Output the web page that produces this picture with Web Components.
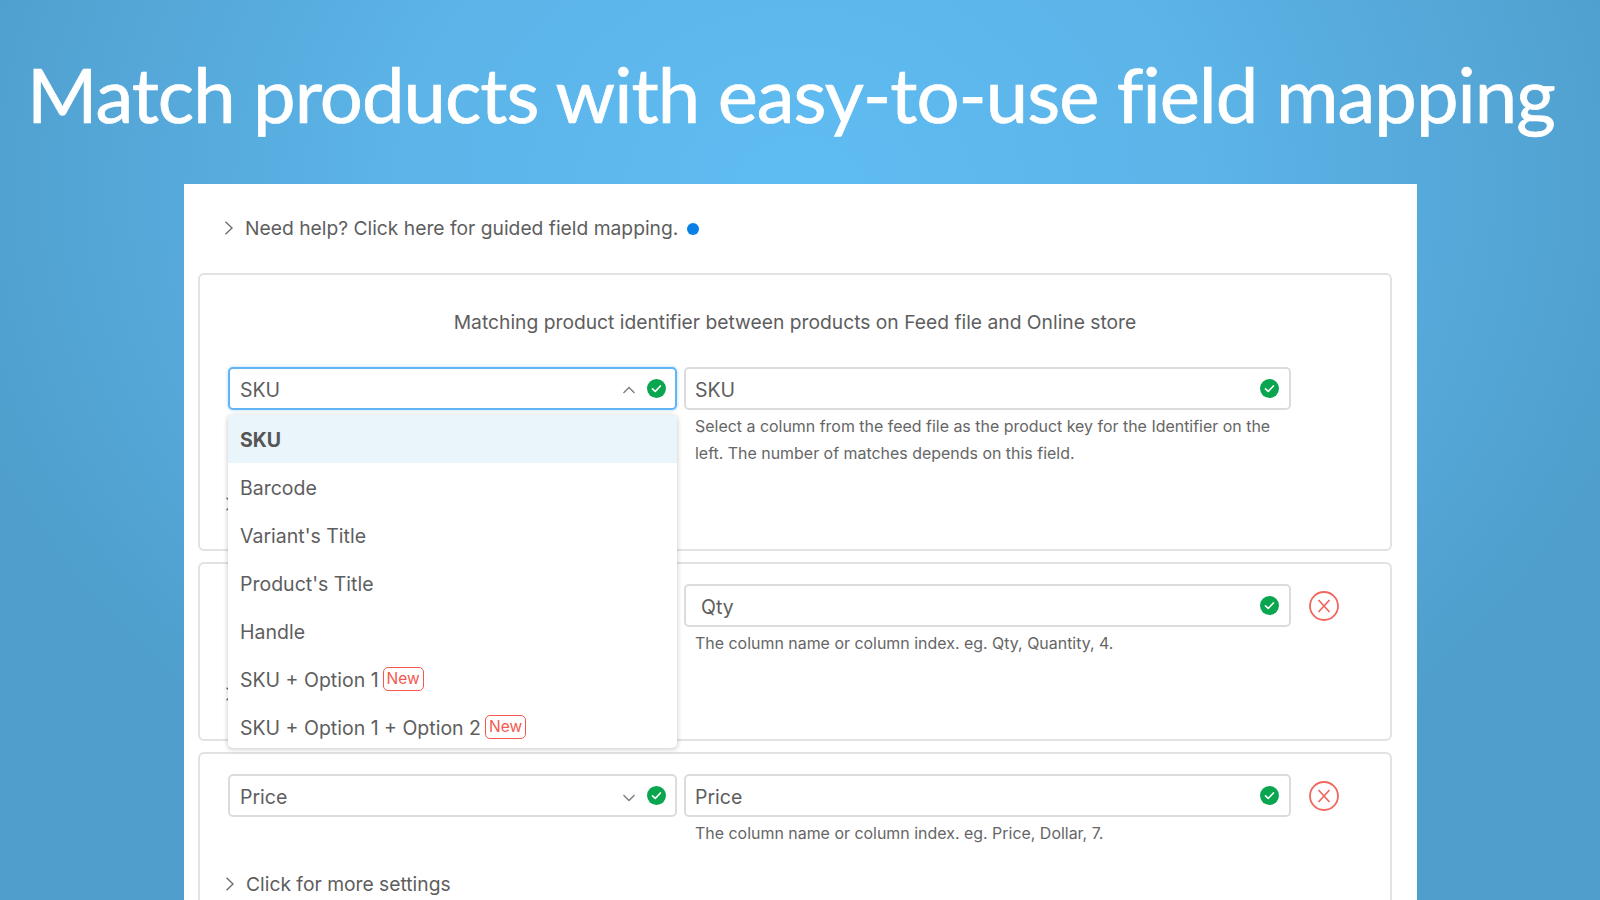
<!DOCTYPE html>
<html>
<head>
<meta charset="utf-8">
<title>Field mapping</title>
<style>
    html, body { margin: 0; height: 900px; overflow: hidden; }
    body {
        font-family: Inter, "Liberation Sans", sans-serif;
        color: #5e5e5e;
        background: radial-gradient(ellipse 880px 720px at 800px 190px, #5fbcf2 0%, #5cb4e8 45%, #4f9ecc 100%);
    }
</style>
</head>
<body>
<map-page>
    <map-banner>Match products with easy-to-use field mapping</map-banner>
    <map-panel>
        <map-toggle slot="help" dot>Need help? Click here for guided field mapping.</map-toggle>

        <map-card height="278">
            <div slot="title">Matching product identifier between products on Feed file and Online store</div>
            <map-field open value="SKU">
                <map-menu slot="menu">
                    <map-option selected>SKU</map-option>
                    <map-option>Barcode</map-option>
                    <map-option>Variant's Title</map-option>
                    <map-option>Product's Title</map-option>
                    <map-option>Handle</map-option>
                    <map-option tag>SKU + Option 1</map-option>
                    <map-option tag>SKU + Option 1 + Option 2</map-option>
                </map-menu>
            </map-field>
            <map-input value="SKU">Select a column from the feed file as the product key for the Identifier on the left. The number of matches depends on this field.</map-input>
            <span></span>
            <map-toggle slot="foot"></map-toggle>
        </map-card>

        <map-card height="179">
            <map-field value=""></map-field>
            <map-input value="Qty" indent>The column name or column index. eg. Qty, Quantity, 4.</map-input>
            <map-remove></map-remove>
            <map-toggle slot="foot"></map-toggle>
        </map-card>

        <map-card height="179">
            <map-field value="Price"></map-field>
            <map-input value="Price">The column name or column index. eg. Price, Dollar, 7.</map-input>
            <map-remove></map-remove>
            <map-toggle slot="foot">Click for more settings</map-toggle>
        </map-card>
    </map-panel>
</map-page>

<script>
const CHECK = `<svg width="19" height="19" viewBox="0 0 20 20"><circle cx="10" cy="10" r="10" fill="#0aa64f"/><path d="M5.8 10.4l2.9 2.7 5.4-5.8" fill="none" stroke="#fff" stroke-width="1.7" stroke-linecap="round" stroke-linejoin="round"/></svg>`;

class MapPage extends HTMLElement {
    constructor(){
        super();
        this.attachShadow({mode:"open"}).innerHTML = `
            <style>
                :host { display: flex; flex-direction: column; height: 900px; overflow: hidden; }
            </style>
            <slot></slot>
        `;
    }
}

class MapBanner extends HTMLElement {
    constructor(){
        super();
        this.attachShadow({mode:"open"}).innerHTML = `
            <style>
                :host {
                    display: block;
                    flex: none;
                    height: 184px;
                    box-sizing: border-box;
                    padding: 48px 0 0 27px;
                    color: #fff;
                    font: 400 76px/92px Lato, "Open Sans", sans-serif;
                    letter-spacing: -0.97px;
                    font-variant-ligatures: none;
                    -webkit-text-stroke: 0.7px #fff;
                    white-space: nowrap;
                }
            </style>
            <slot></slot>
        `;
    }
}

class MapPanel extends HTMLElement {
    constructor(){
        super();
        this.attachShadow({mode:"open"}).innerHTML = `
            <style>
                :host {
                    display: block;
                    flex: none;
                    box-sizing: border-box;
                    width: 1233px;
                    height: 716px;
                    margin-left: 184px;
                    padding: 0 25px 0 14px;
                    background: #fff;
                }
                .help { height: 89px; padding: 30px 0 0 26px; box-sizing: border-box; }
                .cards { display: flex; flex-direction: column; gap: 11px; }
            </style>
            <div class="help"><slot name="help"></slot></div>
            <div class="cards"><slot></slot></div>
        `;
    }
}

class MapToggle extends HTMLElement {
    constructor(){
        super();
        var dot = this.hasAttribute("dot");
        this.attachShadow({mode:"open"}).innerHTML = `
            <style>
                :host {
                    display: flex;
                    align-items: center;
                    gap: 11px;
                    height: 28px;
                    font-size: 19.25px;
                }
                svg { flex: none; }
                .dot { width: 12px; height: 12px; border-radius: 50%; background: #0a7fe6; margin: 2px 0 0 -2px; }
            </style>
            <svg width="10" height="14" viewBox="0 0 10 14"><path d="M1.5 .8l6.5 6.2-6.5 6.2" fill="none" stroke="#6e6e6e" stroke-width="1.4"/></svg>
            <slot></slot>
            ${dot ? '<span class="dot"></span>' : ''}
        `;
    }
}

class MapCard extends HTMLElement {
    constructor(){
        super();
        var height = this.getAttribute("height");
        this.attachShadow({mode:"open"}).innerHTML = `
            <style>
                :host {
                    display: flex;
                    flex-direction: column;
                    box-sizing: border-box;
                    height: ${height}px;
                    flex: none;
                    padding: 20px 0 0 28px;
                    border: 2px solid #e2e2e2;
                    border-radius: 6px;
                    background: #fff;
                }
                ::slotted([slot=title]) {
                    text-align: center;
                    font-size: 19.25px;
                    line-height: 28px;
                    margin: 13px 0 31px -28px;
                    width: 1190px;
                }
                .row {
                    display: grid;
                    grid-template-columns: 449px 607px 66px;
                    column-gap: 7px;
                    align-items: start;
                    flex: 1;
                }
                .foot { height: 28px; margin: 0 0 31px -3px; }
            </style>
            <slot name="title"></slot>
            <div class="row"><slot></slot></div>
            <div class="foot"><slot name="foot"></slot></div>
        `;
    }
}

class MapField extends HTMLElement {
    constructor(){
        super();
        var open = this.hasAttribute("open");
        var chevron = open ? "M1.5 8l5.5-5.5L12.5 8" : "M1.5 3l5.5 5.5L12.5 3";
        this.attachShadow({mode:"open"}).innerHTML = `
            <style>
                :host { display: block; position: relative; height: 43px; ${open ? "z-index: 3;" : ""} }
                .box {
                    display: flex;
                    align-items: center;
                    box-sizing: border-box;
                    height: 43px;
                    padding: 0 9px 0 10px;
                    border: 2px solid ${open ? "#62b5f5" : "#dcdcdc"};
                    border-radius: 5px;
                    background: #fff;
                    font-size: 19.5px;
                    ${open ? "box-shadow: 0 0 3px 1px #d3e9fb;" : ""}
                }
                .val { flex: 1; padding-top: 2px; }
                svg { flex: none; }
                .arrow { margin: 3px 11px 0 0; }
            </style>
            <div class="box">
                <span class="val">${this.getAttribute("value")}</span>
                <svg class="arrow" width="14" height="11" viewBox="0 0 14 11"><path d="${chevron}" fill="none" stroke="#7a7a7a" stroke-width="1.3"/></svg>
                ${CHECK}
            </div>
            <slot name="menu"></slot>
        `;
    }
}

class MapMenu extends HTMLElement {
    constructor(){
        super();
        this.attachShadow({mode:"open"}).innerHTML = `
            <style>
                :host {
                    display: block;
                    position: absolute;
                    left: 0;
                    right: 0;
                    top: 48px;
                    height: 333px;
                    background: #fff;
                    border-radius: 5px;
                    box-shadow: 0 1px 4px 1px rgba(0,0,0,.17);
                    overflow: hidden;
                }
            </style>
            <slot></slot>
        `;
    }
}

class MapOption extends HTMLElement {
    constructor(){
        super();
        var selected = this.hasAttribute("selected");
        var tag = this.hasAttribute("tag");
        this.attachShadow({mode:"open"}).innerHTML = `
            <style>
                :host {
                    display: flex;
                    align-items: center;
                    height: 48px;
                    padding: 2px 0 0 12px;
                    box-sizing: border-box;
                    font-size: 19.5px;
                    ${selected ? "background: #e9f4fb; font-weight: 700; color: #555;" : ""}
                }
                .tag {
                    box-sizing: border-box;
                    margin: -3px 0 0 4px;
                    padding: 0 3px;
                    height: 24px;
                    line-height: 21px;
                    border: 1.5px solid #f4594f;
                    border-radius: 5px;
                    color: #f4594f;
                    font-size: 15.5px;
                }
            </style>
            <slot></slot>
            ${tag ? '<span class="tag">New</span>' : ''}
        `;
    }
}

class MapInput extends HTMLElement {
    constructor(){
        super();
        var indent = this.hasAttribute("indent") ? 15 : 9;
        this.attachShadow({mode:"open"}).innerHTML = `
            <style>
                :host { display: block; }
                .box {
                    display: flex;
                    align-items: center;
                    box-sizing: border-box;
                    height: 43px;
                    padding: 0 10px 0 ${indent}px;
                    border: 2px solid #dcdcdc;
                    border-radius: 5px;
                    font-size: 19.5px;
                }
                .val { flex: 1; padding-top: 2px; }
                .hint {
                    margin: 4px 0 0 11px;
                    font-size: 15.95px;
                    line-height: 26.5px;
                    color: #666;
                    width: 590px;
                }
            </style>
            <div class="box"><span class="val">${this.getAttribute("value")}</span>${CHECK}</div>
            <div class="hint"><slot></slot></div>
        `;
    }
}

class MapRemove extends HTMLElement {
    constructor(){
        super();
        this.attachShadow({mode:"open"}).innerHTML = `
            <style>
                :host { display: block; padding: 7px 0 0 11px; height: 30px; }
            </style>
            <svg width="30" height="30" viewBox="0 0 30 30"><circle cx="15" cy="15" r="14" fill="none" stroke="#f0675f" stroke-width="1.8"/><path d="M9.5 9l11 12M20.5 9l-11 12" fill="none" stroke="#f0675f" stroke-width="1.7"/></svg>
        `;
    }
}

customElements.define("map-page",MapPage);
customElements.define("map-banner",MapBanner);
customElements.define("map-panel",MapPanel);
customElements.define("map-toggle",MapToggle);
customElements.define("map-card",MapCard);
customElements.define("map-field",MapField);
customElements.define("map-menu",MapMenu);
customElements.define("map-option",MapOption);
customElements.define("map-input",MapInput);
customElements.define("map-remove",MapRemove);
</script>
</body>
</html>
